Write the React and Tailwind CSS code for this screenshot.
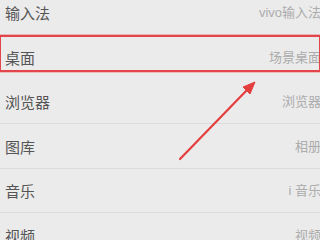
import React from "react";

const rows = [
  ["输入法", "vivo输入法"],
  ["桌面", "场景桌面"],
  ["浏览器", "浏览器"],
  ["图库", "相册"],
  ["音乐", "i 音乐"],
  ["视频", "视频"],
];

export default function App() {
  return (
    <div
      className="relative w-[320px] h-[240px] overflow-hidden bg-[#ebebeb]"
      style={{ fontFamily: '"Noto Sans CJK SC", "Noto Sans", sans-serif' }}
    >
      <div className="-mt-[9.5px] flex flex-col">
        {rows.map(([l, r], i) => (
          <div
            key={i}
            className={`flex h-[44.6px] shrink-0 items-center justify-between pl-[5px] -mr-[1px] ${
              i === 1 ? "" : "border-b border-[#dcdcdc]"
            }`}
          >
            <span className="text-[15px] leading-none text-[#555555]">{l}</span>
            <span
              className="text-[13px] leading-none text-[#acacac]"
              style={{ fontFamily: '"Liberation Sans", "Noto Sans CJK SC", sans-serif' }}
            >
              {r}
            </span>
          </div>
        ))}
      </div>
      <div className="absolute -left-[1px] -right-[1px] top-[35px] h-[37px] border-2 border-[#e4454b] shadow-[0_0_0_1px_rgba(240,140,140,0.5)]" />
      <svg className="absolute left-0 top-0" width="320" height="240" viewBox="0 0 320 240">
        <line x1="180" y1="159" x2="247" y2="90" stroke="#e53e3e" strokeWidth="2.2" strokeLinecap="round" />
        <polygon points="255,82 243,87 250,94" fill="#e53e3e" stroke="#e53e3e" strokeWidth="1" strokeLinejoin="round" />
      </svg>
    </div>
  );
}
